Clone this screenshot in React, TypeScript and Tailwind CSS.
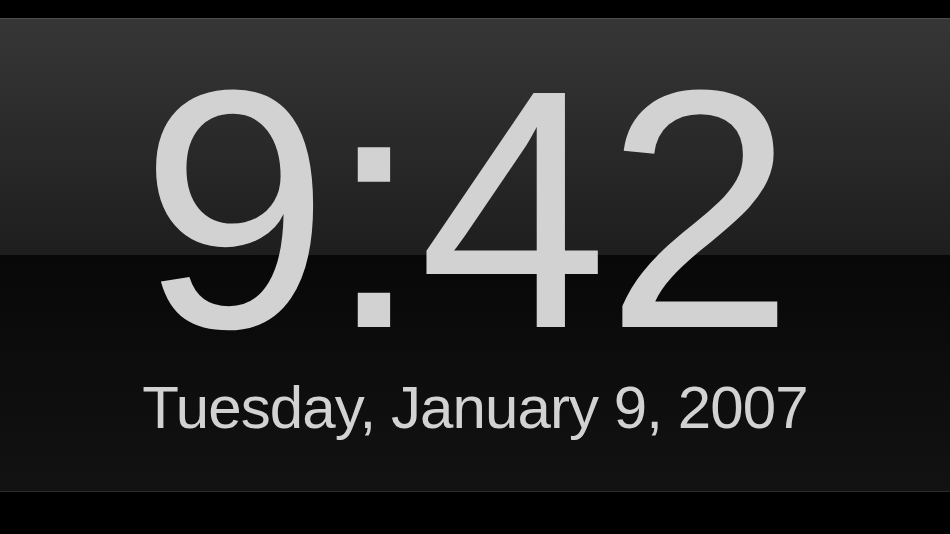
export default function App() {
  return (
    <div className="flex h-[534px] w-[950px] flex-col bg-black font-['Liberation_Sans',Arial,sans-serif]">
      <div className="h-[18px] shrink-0 bg-black" />
      <div className="flex h-[474px] shrink-0 flex-col items-center border-t border-b border-t-[#4e4e4e] border-b-[#2c2c2c] bg-[linear-gradient(to_bottom,#363636_0%,#1e1e1e_50%,#080808_50%,#121212_100%)] pt-[21px]">
        <div className="mr-[18px] text-[340px] leading-[338px] tracking-[-2.5px] text-[#d2d2d2]">9:42</div>
        <div className="text-[60px] leading-none tracking-[-0.9px] text-[#d2d2d2]">
          Tuesday, January 9, 2007
        </div>
      </div>
      <div className="flex-1 bg-black" />
    </div>
  );
}
